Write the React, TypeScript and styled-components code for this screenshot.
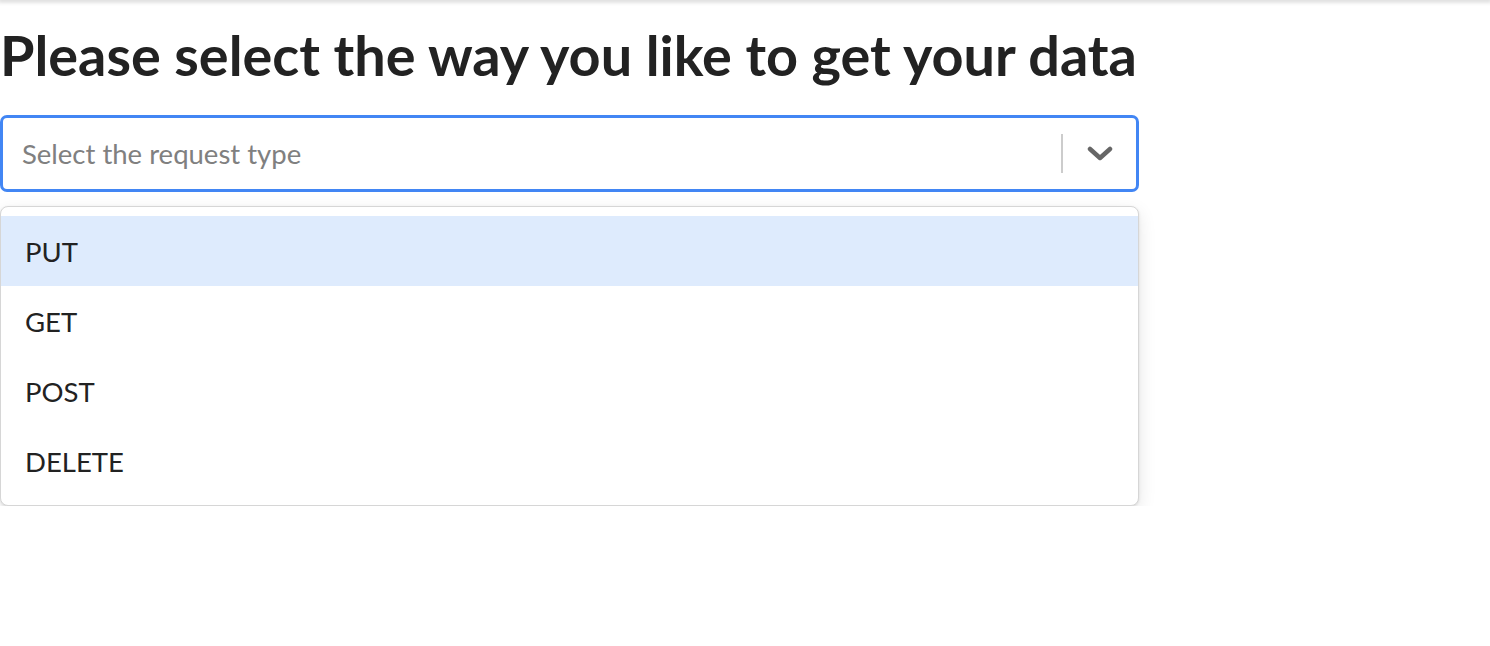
import React from "react";
import styled, { createGlobalStyle } from "styled-components";

const GlobalStyle = createGlobalStyle`
  html, body {
    margin: 0;
    padding: 0;
    background: #ffffff;
    font-family: Lato, "Noto Sans", sans-serif;
    color: #222222;
  }
`;

const TopBar = styled.div`
  height: 0;
  box-shadow: 0 0 4px 2px rgba(0, 0, 0, 0.18);
`;

const Page = styled.main`
  width: 1139px;
  padding-top: 22px;
`;

const Title = styled.h1`
  margin: 0 0 27px 0;
  font-size: 55.8px;
  line-height: 66px;
  font-weight: 700;
  white-space: nowrap;
  color: #222222;
`;

const SelectBox = styled.div`
  position: relative;
`;

const Control = styled.div`
  box-sizing: border-box;
  height: 77px;
  display: flex;
  align-items: center;
  border: 3px solid #4286f4;
  border-radius: 7px;
  background: #ffffff;
`;

const Placeholder = styled.div`
  flex: 1;
  padding-left: 19px;
  font-size: 27.5px;
  color: #808080;
`;

const Indicators = styled.div`
  display: flex;
  align-items: center;
  height: 100%;
`;

const Separator = styled.span`
  width: 2px;
  height: 39px;
  background: #cccccc;
`;

const Chevron = styled.div`
  display: flex;
  align-items: center;
  justify-content: center;
  width: 73px;
  color: #666666;
`;

const Menu = styled.ul`
  list-style: none;
  margin: 14px 0 0 0;
  padding: 9px 0;
  border: 1px solid #d6d6d6;
  border-radius: 8px;
  background: #ffffff;
  box-shadow: 0 6px 18px rgba(0, 0, 0, 0.1), 0 1px 3px rgba(0, 0, 0, 0.1);
`;

const Option = styled.li<{ $focused?: boolean }>`
  height: 70px;
  display: flex;
  align-items: center;
  padding-left: 24px;
  font-size: 27.5px;
  color: #222222;
  background: ${(p) => (p.$focused ? "#deebfd" : "transparent")};
`;

const options = ["PUT", "GET", "POST", "DELETE"];

const App = () => {
  return (
    <>
      <GlobalStyle />
      <TopBar />
      <Page>
        <Title>Please select the way you like to get your data</Title>
        <SelectBox>
          <Control>
            <Placeholder>Select the request type</Placeholder>
            <Indicators>
              <Separator />
              <Chevron>
                <svg width="26" height="16" viewBox="0 0 26 16" fill="none">
                  <path
                    d="M3 3 L13 12 L23 3"
                    stroke="currentColor"
                    strokeWidth="4.5"
                    strokeLinecap="round"
                    strokeLinejoin="round"
                  />
                </svg>
              </Chevron>
            </Indicators>
          </Control>
          <Menu>
            {options.map((o, i) => (
              <Option key={o} $focused={i === 0}>
                {o}
              </Option>
            ))}
          </Menu>
        </SelectBox>
      </Page>
    </>
  );
};

export default App;
